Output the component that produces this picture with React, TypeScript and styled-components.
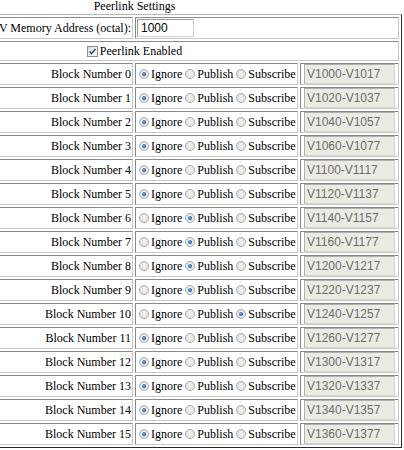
import React from "react";
import styled, { createGlobalStyle } from "styled-components";

const GlobalStyle = createGlobalStyle`
  html, body {
    margin: 0;
    padding: 0;
    background: #fff;
    overflow: hidden;
  }
  body {
    font-family: "Liberation Serif", "Times New Roman", serif;
    font-size: 12px;
    color: #000;
  }
`;

type Mode = "ignore" | "publish" | "subscribe";

const modes: Mode[] = [
  "ignore", "ignore", "ignore", "ignore", "ignore", "ignore",
  "publish", "publish", "publish", "publish",
  "subscribe",
  "ignore", "ignore", "ignore", "ignore", "ignore",
];

const SettingsTable = styled.table`
  margin-left: -133px;
  width: 535px;
  table-layout: fixed;
  border-collapse: separate;
  border-spacing: 2px;
  border: 1px solid;
  border-color: #b4b4b4 #2a2a2a #2a2a2a #b4b4b4;
  font-size: 12px;
`;

const Caption = styled.caption`
  height: 14px;
  line-height: 13px;
  text-align: center;
  white-space: nowrap;
`;

const Col = styled.col<{ $w: number }>`
  width: ${(p) => p.$w}px;
`;

const Cell = styled.td`
  border: 1px solid;
  border-color: #8a8a8a #c8c8c8 #c8c8c8 #8a8a8a;
  padding: 0 1px;
  height: 20px;
  vertical-align: middle;
  white-space: nowrap;
  overflow: hidden;
`;

const LabelCell = styled(Cell)`
  text-align: right;
  padding-right: 1px;
`;

const CenterCell = styled(Cell)`
  height: 18px;
  text-align: center;
`;

const RangeCell = styled(Cell)`
  padding: 0 3px;
`;

const OptionGroup = styled.div`
  display: flex;
  align-items: center;
  gap: 3px;
  padding-left: 2px;
`;

const Option = styled.label`
  display: inline-flex;
  align-items: center;
  gap: 2px;
`;

const Radio = styled.span<{ $on: boolean }>`
  width: 10px;
  height: 10px;
  box-sizing: border-box;
  border-radius: 50%;
  border: 1px solid #a9aaab;
  background: radial-gradient(circle at 50% 50%, #f4f4f4 0, #dcdcdc 100%);
  display: inline-flex;
  align-items: center;
  justify-content: center;

  &::after {
    content: "";
    display: ${(p) => (p.$on ? "block" : "none")};
    width: 4px;
    height: 4px;
    border-radius: 50%;
    background: radial-gradient(circle at 40% 35%, #6aa8e6 0, #1d4f8c 80%);
  }
`;

const CheckLine = styled.label`
  display: inline-flex;
  align-items: center;
  gap: 2px;
`;

const Checkbox = styled.span`
  width: 11px;
  height: 11px;
  box-sizing: border-box;
  border: 1px solid #8e8f8f;
  background: linear-gradient(135deg, #dcdcdc, #fbfbfb);
  display: inline-flex;
  align-items: center;
  justify-content: center;
`;

const AddrInput = styled.input`
  display: block;
  box-sizing: border-box;
  width: 57px;
  height: 18px;
  margin: 0;
  padding: 0 3px;
  border: 1px solid;
  border-color: #9a9a9a #d0d0d0 #d0d0d0 #9a9a9a;
  font-family: "Liberation Sans", Arial, sans-serif;
  font-size: 12px;
  color: #000;
  background: #fff;
  outline: none;
`;

const RangeBox = styled.input`
  display: block;
  box-sizing: border-box;
  width: 91px;
  height: 20px;
  margin: 0;
  padding: 0 2px;
  border: 1px solid;
  border-color: #b0b0b0 #d4d4d4 #d4d4d4 #b0b0b0;
  background: #ebebe4;
  font-family: "Liberation Sans", Arial, sans-serif;
  font-size: 12px;
  color: #6d6d6d;
  outline: none;
`;

const oct = (n: number) => n.toString(8);

const BlockRow = ({ index, mode }: { index: number; mode: Mode }) => {
  const start = 512 + index * 16;
  const range = `V${oct(start)}-V${oct(start + 15)}`;
  return (
    <tr>
      <LabelCell>Block Number {index}</LabelCell>
      <Cell>
        <OptionGroup>
          <Option>
            <Radio $on={mode === "ignore"} />
            Ignore
          </Option>
          <Option>
            <Radio $on={mode === "publish"} />
            Publish
          </Option>
          <Option>
            <Radio $on={mode === "subscribe"} />
            Subscribe
          </Option>
        </OptionGroup>
      </Cell>
      <RangeCell>
        <RangeBox value={range} readOnly disabled />
      </RangeCell>
    </tr>
  );
};

const App = () => {
  return (
    <>
      <GlobalStyle />
      <SettingsTable>
        <Caption>Peerlink Settings</Caption>
        <colgroup>
          <Col $w={263} />
          <Col $w={163} />
          <Col $w={99} />
        </colgroup>
        <tbody>
          <tr>
            <LabelCell>V Memory Address (octal):</LabelCell>
            <Cell colSpan={2}>
              <AddrInput defaultValue="1000" />
            </Cell>
          </tr>
          <tr>
            <CenterCell colSpan={3}>
              <CheckLine>
                <Checkbox>
                  <svg width="7" height="7" viewBox="0 0 7 7">
                    <path d="M0.5 3.5 L2.5 5.5 L6.5 1" fill="none" stroke="#2b3f7a" strokeWidth="1.4" />
                  </svg>
                </Checkbox>
                Peerlink Enabled
              </CheckLine>
            </CenterCell>
          </tr>
          {modes.map((m, i) => (
            <BlockRow key={i} index={i} mode={m} />
          ))}
        </tbody>
      </SettingsTable>
    </>
  );
};

export default App;
